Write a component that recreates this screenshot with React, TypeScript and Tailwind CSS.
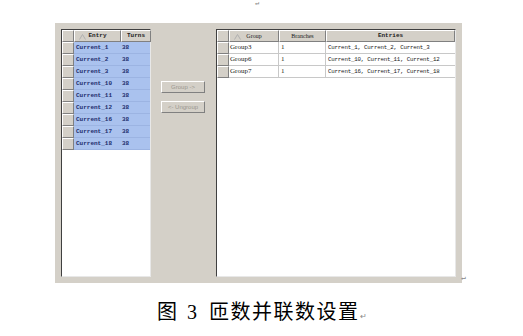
import React from "react";

const leftRows = ["Current_1","Current_2","Current_3","Current_10","Current_11","Current_12","Current_16","Current_17","Current_18"];
const rightRows = [
  ["Group3","1","Current_1, Current_2, Current_3"],
  ["Group6","1","Current_10, Current_11, Current_12"],
  ["Group7","1","Current_16, Current_17, Current_18"],
];

function Tri() {
  return (
    <svg width="7" height="6" viewBox="0 0 7 6" className="absolute left-[4px] top-[3px]">
      <path d="M0.5 5.5 L3.5 0.5 L6.5 5.5" fill="none" stroke="#b0b0b0" strokeWidth="1" />
    </svg>
  );
}

function HeadCell({ w, children, tri }: { w: string; children?: React.ReactNode; tri?: boolean }) {
  return (
    <div className={`${w} relative h-[12px] shrink-0 bg-[#d4d0c8] border-t border-l border-t-white border-l-white border-r border-b border-r-[#808080] border-b-[#808080] flex items-center justify-center text-[6px] font-bold leading-none text-[#202020]`}>
      {tri && <Tri />}
      {children}
    </div>
  );
}

export default function App() {
  return (
    <div className="w-[523px] h-[336px] bg-white relative overflow-hidden" style={{ fontFamily: '"Liberation Mono", monospace' }}>
      <div className="absolute left-[255px] top-0 text-[7px] leading-none text-[#888]">↵</div>
      <div className="pt-[23px] pl-[55px]">
        <div className="w-[407px] h-[260px] bg-[#d4d0c8] p-[6px] flex">
          {/* Left list */}
          <div className="w-[90px] h-[248px] border-t border-l border-t-[#404040] border-l-[#404040] border-r border-b border-r-[#e8e8e8] border-b-[#e8e8e8] bg-white flex flex-col">
            <div className="flex">
              <HeadCell w="w-[12px]" />
              <HeadCell w="w-[47px]" tri>Entry</HeadCell>
              <HeadCell w="w-[30px]">Turns</HeadCell>
            </div>
            {leftRows.map((r) => (
              <div key={r} className="flex h-[12px]">
                <div className="w-[12px] h-[12px] bg-[#d4d0c8] border-t border-l border-t-white border-l-white border-r border-b border-r-[#808080] border-b-[#808080]" />
                <div className="flex-1 bg-[#aac2ee] flex items-center text-[6px] font-bold text-[#1c2c6c] leading-none border-b border-[#9cb4e2]">
                  <span className="w-[47px] pl-[2px]">{r}</span>
                  <span className="pl-[1px]">38</span>
                </div>
              </div>
            ))}
          </div>
          {/* Buttons */}
          <div className="ml-[10px] w-[44px] pt-[52px] flex flex-col gap-[8px]">
            <div className="h-[12px] w-[44px] border border-t-white border-l-white border-r-[#808080] border-b-[#808080] flex items-center justify-center text-[6px] text-[#9a968e] leading-none" style={{ fontFamily: '"Liberation Sans", sans-serif' }}>Group -&gt;</div>
            <div className="h-[12px] w-[44px] border border-t-white border-l-white border-r-[#808080] border-b-[#808080] flex items-center justify-center text-[6px] text-[#9a968e] leading-none" style={{ fontFamily: '"Liberation Sans", sans-serif' }}>&lt;- Ungroup</div>
          </div>
          {/* Right list */}
          <div className="ml-[11px] w-[240px] h-[248px] border-t border-l border-t-[#404040] border-l-[#404040] border-r border-b border-r-[#e8e8e8] border-b-[#e8e8e8] bg-white flex flex-col">
            <div className="flex">
              <HeadCell w="w-[12px]" />
              <HeadCell w="w-[50px]" tri><span className="font-normal" style={{ fontFamily: '"Liberation Serif", serif' }}>Group</span></HeadCell>
              <HeadCell w="w-[47px]"><span className="font-normal" style={{ fontFamily: '"Liberation Serif", serif' }}>Branches</span></HeadCell>
              <HeadCell w="w-[129px]">Entries</HeadCell>
            </div>
            {rightRows.map((r) => (
              <div key={r[0]} className="flex h-[12px]">
                <div className="w-[12px] h-[12px] bg-[#d4d0c8] border-t border-l border-t-white border-l-white border-r border-b border-r-[#808080] border-b-[#808080]" />
                <div className="w-[50px] border-r border-b border-[#c8c8c8] flex items-center pl-[1px] text-[7px] text-[#202020] leading-none" style={{ fontFamily: '"Liberation Serif", serif' }}>{r[0]}</div>
                <div className="w-[47px] border-r border-b border-[#c8c8c8] flex items-center pl-[2px] text-[7px] text-[#202020] leading-none" style={{ fontFamily: '"Liberation Serif", serif' }}>{r[1]}</div>
                <div className="w-[129px] border-b border-[#c8c8c8] flex items-center pl-[2px] text-[5.8px] text-[#202020] leading-none whitespace-nowrap tracking-[-0.2px]">{r[2]}</div>
              </div>
            ))}
          </div>
        </div>
      </div>
      <div className="absolute left-[461px] top-[274px] text-[8px] leading-none text-[#888]">↵</div>
      <div className="mt-[18px] flex items-baseline pl-[157px] text-[20px] text-black leading-none" style={{ fontFamily: '"Noto Sans CJK SC", sans-serif' }}>
        <span>图</span>
        <span className="ml-[10px]" style={{ fontFamily: '"Liberation Serif", serif' }}>3</span>
        <span className="ml-[12px] tracking-[1.5px]">匝数并联数设置</span>
        <span className="text-[8px] text-[#888]">↵</span>
      </div>
    </div>
  );
}
